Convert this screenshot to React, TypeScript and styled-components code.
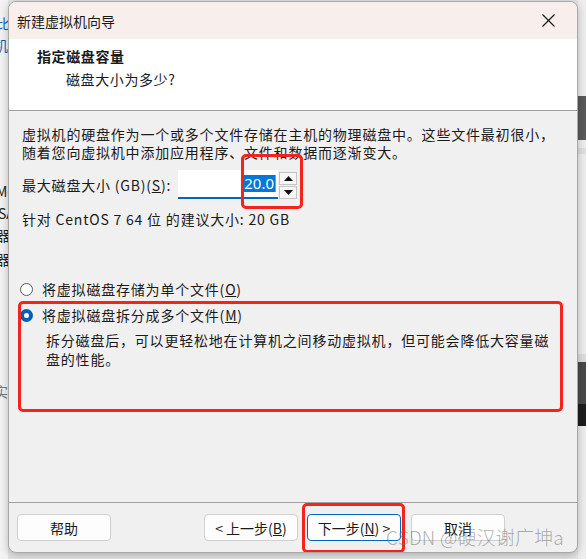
import React from "react";
import styled, { createGlobalStyle } from "styled-components";

const Global = createGlobalStyle`
  html, body { margin: 0; padding: 0; }
  body {
    width: 586px; height: 559px; overflow: hidden;
    background: #dcdcdc;
    font-family: "Segoe UI", "Noto Sans CJK SC", "Noto Sans", sans-serif;
    color: #1a1a1a;
  }
`;

const Screen = styled.div`
  position: relative;
  display: flex;
  width: 586px;
  height: 559px;
  background: #e4e4e4;
`;

const SideStrip = styled.div<{ $side: "left" | "right" }>`
  width: 8px;
  flex: none;
  overflow: hidden;
  display: flex;
  flex-direction: column;
  background: ${(p) => (p.$side === "left" ? "#f3f3f3" : "#eeeeee")};
  font-family: "Noto Sans CJK SC", sans-serif;
  font-size: 14px;
  white-space: nowrap;
`;

const StripFrag = styled.div<{ $top: number; $color?: string; $h?: number; $bg?: string; $shift?: number }>`
  margin-top: ${(p) => p.$top}px;
  height: ${(p) => p.$h ?? 20}px;
  line-height: ${(p) => p.$h ?? 20}px;
  color: ${(p) => p.$color ?? "#222"};
  background: ${(p) => p.$bg ?? "transparent"};
  margin-left: ${(p) => p.$shift ?? 0}px;
  flex: none;
`;

const Dialog = styled.div`
  position: relative;
  width: 570px;
  height: 552px;
  margin-top: 1px;
  flex: none;
  display: flex;
  flex-direction: column;
  background: #f0f0f0;
  border: 1px solid #a8a8a8;
  border-radius: 8px;
  box-sizing: border-box;
  overflow: hidden;
  box-shadow: 0 2px 8px rgba(0, 0, 0, 0.25);
`;

const TitleBar = styled.div`
  height: 37px;
  flex: none;
  display: flex;
  align-items: center;
  justify-content: space-between;
  background: #f8efec;
  padding: 0 0 0 8px;
  font-size: 14px;
  font-family: "Noto Sans CJK SC", sans-serif;
`;

const CloseBtn = styled.div`
  width: 46px;
  height: 37px;
  display: flex;
  align-items: center;
  justify-content: center;
  padding-right: 6px;
`;

const Header = styled.div`
  height: 72px;
  flex: none;
  background: #ffffff;
  border-bottom: 1px solid #a0a0a0;
  padding: 7px 0 0 28px;
  box-sizing: border-box;
  font-family: "Noto Sans CJK SC", sans-serif;
`;

const HeaderTitle = styled.div`
  font-size: 14px;
  font-weight: 700;
  line-height: 20px;
  letter-spacing: 0.6px;
`;

const HeaderSub = styled.div`
  font-size: 14px;
  line-height: 20px;
  margin-top: 3px;
  padding-left: 29px;
  letter-spacing: 0.6px;
`;

const Body = styled.div`
  flex: 1;
  padding: 14px 0 0 13px;
  font-family: "Noto Sans CJK SC", sans-serif;
  font-size: 14px;
  letter-spacing: 0.8px;
`;

const Para = styled.div<{ $lh?: number; $mt?: number; $indent?: number }>`
  line-height: ${(p) => p.$lh ?? 18}px;
  margin-top: ${(p) => p.$mt ?? 0}px;
  padding-left: ${(p) => p.$indent ?? 0}px;
  white-space: nowrap;
`;

const SizeRow = styled.div`
  display: flex;
  align-items: center;
  height: 29px;
  margin-top: 9px;
`;

const SizeLabel = styled.span`
  width: 156px;
  flex: none;
  white-space: nowrap;
`;

const Input = styled.div`
  width: 100px;
  height: 29px;
  box-sizing: border-box;
  background: #ffffff;
  border-bottom: 2px solid #0067c0;
  display: flex;
  align-items: center;
  justify-content: flex-end;
  padding-right: 2px;
`;

const Selected = styled.span`
  background: #0078d7;
  color: #ffffff;
  font-family: "Segoe UI", "Noto Sans", sans-serif;
  font-size: 15px;
  letter-spacing: 0;
  line-height: 17px;
  padding: 0 1px;
  border-right: 1px solid #e08a30;
`;

const Spinner = styled.div`
  display: flex;
  flex-direction: column;
  margin-left: 1px;
  height: 27px;
  align-self: flex-start;
  margin-top: 2px;
`;

const SpinBtn = styled.div`
  width: 18px;
  height: 13px;
  box-sizing: border-box;
  border: 1px solid #c4c4c4;
  background: #f6f6f6;
  display: flex;
  align-items: center;
  justify-content: center;
  & + & { margin-top: 1px; }
`;

const Underline = styled.span`
  text-decoration: underline;
`;

const RadioRow = styled.div<{ $mt: number }>`
  display: flex;
  align-items: center;
  height: 18px;
  margin-top: ${(p) => p.$mt}px;
  margin-left: -2px;
`;

const RadioCircle = styled.span<{ $checked?: boolean }>`
  width: 13px;
  height: 13px;
  box-sizing: border-box;
  border-radius: 50%;
  flex: none;
  margin-right: 9px;
  ${(p) =>
    p.$checked
      ? `background: #ffffff; border: 4px solid #005fb8;`
      : `background: #ffffff; border: 1px solid #5a5a5a;`}
`;

const Footer = styled.div`
  height: 50px;
  flex: none;
  border-top: 1px solid #a0a0a0;
  display: flex;
  align-items: flex-start;
  padding: 11px 0 0 8px;
  box-sizing: border-box;
  font-family: "Noto Sans CJK SC", sans-serif;
`;

const Button = styled.div<{ $primary?: boolean; $gapLeft?: number }>`
  width: 94px;
  height: 27px;
  box-sizing: border-box;
  border: 1px solid ${(p) => (p.$primary ? "#0067c0" : "#d0d0d0")};
  border-radius: 4px;
  background: #fdfdfd;
  display: flex;
  align-items: center;
  justify-content: center;
  font-size: 14px;
  margin-left: ${(p) => p.$gapLeft ?? 0}px;
  white-space: nowrap;
`;

const Annot = styled.div<{ $x: number; $y: number; $w: number; $h: number }>`
  position: absolute;
  left: ${(p) => p.$x}px;
  top: ${(p) => p.$y}px;
  width: ${(p) => p.$w}px;
  height: ${(p) => p.$h}px;
  box-sizing: border-box;
  border: 3px solid #f5231c;
  border-radius: 5px;
  pointer-events: none;
`;

const Watermark = styled.div`
  position: absolute;
  left: 386px;
  top: 525px;
  font-family: "Noto Sans CJK SC", sans-serif;
  font-size: 19px;
  line-height: 24px;
  font-weight: 300;
  color: rgba(110, 110, 110, 0.55);
  white-space: nowrap;
  letter-spacing: 0.2px;
  pointer-events: none;
`;

const Arrow = ({ up }: { up?: boolean }) => (
  <svg width="9" height="5" viewBox="0 0 9 5">
    <path d={up ? "M0 5 L4.5 0 L9 5 Z" : "M0 0 L4.5 5 L9 0 Z"} fill="#111" />
  </svg>
);

export default function App() {
  return (
    <>
      <Global />
      <Screen>
        <SideStrip $side="left">
          <StripFrag $top={13} $color="#1a5fb4" $shift={-4}>比</StripFrag>
          <StripFrag $top={2} $color="#1a5fb4" $shift={-6}>机</StripFrag>
          <StripFrag $top={126} $shift={-4}>Me</StripFrag>
          <StripFrag $top={2} $shift={-2}>SA</StripFrag>
          <StripFrag $top={2} $shift={-4}>器</StripFrag>
          <StripFrag $top={4} $shift={-4}>器</StripFrag>
          <StripFrag $top={112} $color="#777" $shift={-6}>实</StripFrag>
        </SideStrip>
        <Dialog>
          <TitleBar>
            <span>新建虚拟机向导</span>
            <CloseBtn>
              <svg width="13" height="13" viewBox="0 0 13 13">
                <path d="M0.5 0.5 L12.5 12.5 M12.5 0.5 L0.5 12.5" stroke="#1a1a1a" strokeWidth="1.2" />
              </svg>
            </CloseBtn>
          </TitleBar>
          <Header>
            <HeaderTitle>指定磁盘容量</HeaderTitle>
            <HeaderSub>磁盘大小为多少?</HeaderSub>
          </Header>
          <Body>
            <Para>虚拟机的硬盘作为一个或多个文件存储在主机的物理磁盘中。这些文件最初很小，</Para>
            <Para>随着您向虚拟机中添加应用程序、文件和数据而逐渐变大。</Para>
            <SizeRow>
              <SizeLabel>
                最大磁盘大小 (GB)(<Underline>S</Underline>):
              </SizeLabel>
              <Input>
                <Selected>20.0</Selected>
              </Input>
              <Spinner>
                <SpinBtn><Arrow up /></SpinBtn>
                <SpinBtn><Arrow /></SpinBtn>
              </Spinner>
            </SizeRow>
            <Para $mt={11}>针对 CentOS 7 64 位 的建议大小: 20 GB</Para>
            <RadioRow $mt={52}>
              <RadioCircle />
              <span>将虚拟磁盘存储为单个文件(<Underline>O</Underline>)</span>
            </RadioRow>
            <RadioRow $mt={8}>
              <RadioCircle $checked />
              <span>将虚拟磁盘拆分成多个文件(<Underline>M</Underline>)</span>
            </RadioRow>
            <Para $lh={19} $mt={7} $indent={24}>拆分磁盘后，可以更轻松地在计算机之间移动虚拟机，但可能会降低大容量磁</Para>
            <Para $lh={19} $indent={24}>盘的性能。</Para>
          </Body>
          <Footer>
            <Button>帮助</Button>
            <Button $gapLeft={93}>&lt; 上一步(<Underline>B</Underline>)</Button>
            <Button $primary $gapLeft={9}>下一步(<Underline>N</Underline>) &gt;</Button>
            <Button $gapLeft={10}>取消</Button>
          </Footer>
          <Annot $x={232} $y={152} $w={62} $h={55} />
          <Annot $x={9} $y={299} $w={545} $h={111} />
          <Annot $x={293} $y={501} $w={103} $h={50} />
        </Dialog>
        <SideStrip $side="right">
          <StripFrag $top={96} $bg="#5a5a5a" $h={44} />
          <StripFrag $top={8} $bg="#e0e0e0" $h={6} />
          <StripFrag $top={200} $bg="#dddddd" $h={8} />
          <StripFrag $top={0} $bg="#4a4a4a" $h={42} />
          <StripFrag $top={0} $bg="#1e1e1e" $h={22} />
        </SideStrip>
        <Watermark>CSDN @硬汉谢广坤a</Watermark>
      </Screen>
    </>
  );
}
